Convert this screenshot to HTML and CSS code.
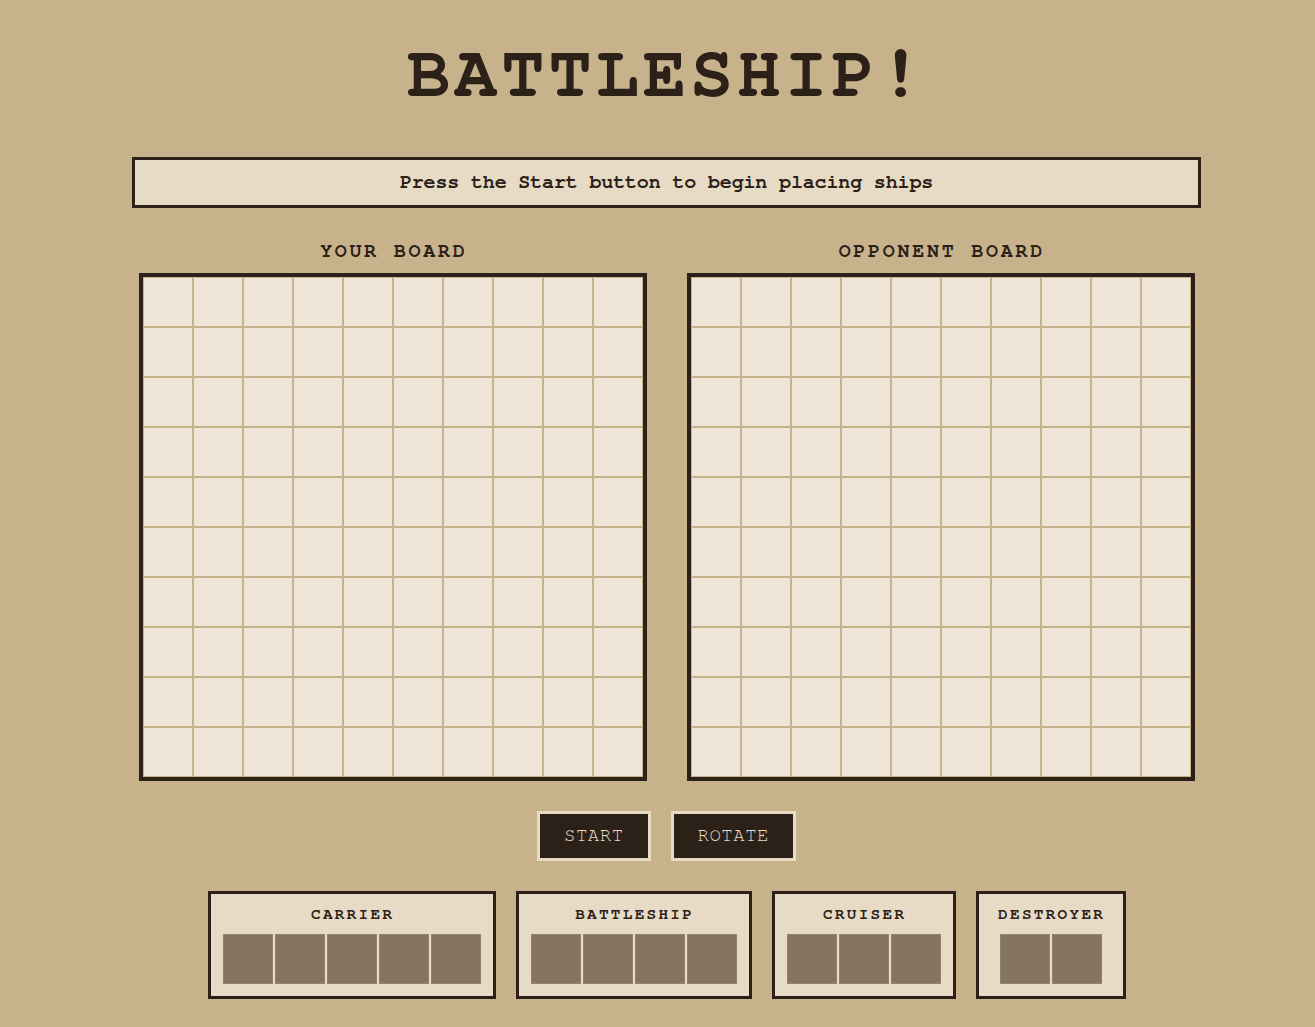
FILE: index.html
```html
<!DOCTYPE html>
<html lang="en">
<head>
<meta charset="utf-8">
<title>Battleship!</title>
<link rel="stylesheet" href="styles.css">
</head>
<body>
<div class="page">
  <h1 class="title">BATTLESHIP!</h1>
  <div class="message">Press the Start button to begin placing ships</div>

  <div class="boards">
    <section class="board-wrap">
      <h2 class="board-title">YOUR BOARD</h2>
      <div class="board">
        <div class="cell"></div><div class="cell"></div><div class="cell"></div><div class="cell"></div><div class="cell"></div><div class="cell"></div><div class="cell"></div><div class="cell"></div><div class="cell"></div><div class="cell"></div>
        <div class="cell"></div><div class="cell"></div><div class="cell"></div><div class="cell"></div><div class="cell"></div><div class="cell"></div><div class="cell"></div><div class="cell"></div><div class="cell"></div><div class="cell"></div>
        <div class="cell"></div><div class="cell"></div><div class="cell"></div><div class="cell"></div><div class="cell"></div><div class="cell"></div><div class="cell"></div><div class="cell"></div><div class="cell"></div><div class="cell"></div>
        <div class="cell"></div><div class="cell"></div><div class="cell"></div><div class="cell"></div><div class="cell"></div><div class="cell"></div><div class="cell"></div><div class="cell"></div><div class="cell"></div><div class="cell"></div>
        <div class="cell"></div><div class="cell"></div><div class="cell"></div><div class="cell"></div><div class="cell"></div><div class="cell"></div><div class="cell"></div><div class="cell"></div><div class="cell"></div><div class="cell"></div>
        <div class="cell"></div><div class="cell"></div><div class="cell"></div><div class="cell"></div><div class="cell"></div><div class="cell"></div><div class="cell"></div><div class="cell"></div><div class="cell"></div><div class="cell"></div>
        <div class="cell"></div><div class="cell"></div><div class="cell"></div><div class="cell"></div><div class="cell"></div><div class="cell"></div><div class="cell"></div><div class="cell"></div><div class="cell"></div><div class="cell"></div>
        <div class="cell"></div><div class="cell"></div><div class="cell"></div><div class="cell"></div><div class="cell"></div><div class="cell"></div><div class="cell"></div><div class="cell"></div><div class="cell"></div><div class="cell"></div>
        <div class="cell"></div><div class="cell"></div><div class="cell"></div><div class="cell"></div><div class="cell"></div><div class="cell"></div><div class="cell"></div><div class="cell"></div><div class="cell"></div><div class="cell"></div>
        <div class="cell"></div><div class="cell"></div><div class="cell"></div><div class="cell"></div><div class="cell"></div><div class="cell"></div><div class="cell"></div><div class="cell"></div><div class="cell"></div><div class="cell"></div>
      </div>
    </section>
    <section class="board-wrap">
      <h2 class="board-title">OPPONENT BOARD</h2>
      <div class="board">
        <div class="cell"></div><div class="cell"></div><div class="cell"></div><div class="cell"></div><div class="cell"></div><div class="cell"></div><div class="cell"></div><div class="cell"></div><div class="cell"></div><div class="cell"></div>
        <div class="cell"></div><div class="cell"></div><div class="cell"></div><div class="cell"></div><div class="cell"></div><div class="cell"></div><div class="cell"></div><div class="cell"></div><div class="cell"></div><div class="cell"></div>
        <div class="cell"></div><div class="cell"></div><div class="cell"></div><div class="cell"></div><div class="cell"></div><div class="cell"></div><div class="cell"></div><div class="cell"></div><div class="cell"></div><div class="cell"></div>
        <div class="cell"></div><div class="cell"></div><div class="cell"></div><div class="cell"></div><div class="cell"></div><div class="cell"></div><div class="cell"></div><div class="cell"></div><div class="cell"></div><div class="cell"></div>
        <div class="cell"></div><div class="cell"></div><div class="cell"></div><div class="cell"></div><div class="cell"></div><div class="cell"></div><div class="cell"></div><div class="cell"></div><div class="cell"></div><div class="cell"></div>
        <div class="cell"></div><div class="cell"></div><div class="cell"></div><div class="cell"></div><div class="cell"></div><div class="cell"></div><div class="cell"></div><div class="cell"></div><div class="cell"></div><div class="cell"></div>
        <div class="cell"></div><div class="cell"></div><div class="cell"></div><div class="cell"></div><div class="cell"></div><div class="cell"></div><div class="cell"></div><div class="cell"></div><div class="cell"></div><div class="cell"></div>
        <div class="cell"></div><div class="cell"></div><div class="cell"></div><div class="cell"></div><div class="cell"></div><div class="cell"></div><div class="cell"></div><div class="cell"></div><div class="cell"></div><div class="cell"></div>
        <div class="cell"></div><div class="cell"></div><div class="cell"></div><div class="cell"></div><div class="cell"></div><div class="cell"></div><div class="cell"></div><div class="cell"></div><div class="cell"></div><div class="cell"></div>
        <div class="cell"></div><div class="cell"></div><div class="cell"></div><div class="cell"></div><div class="cell"></div><div class="cell"></div><div class="cell"></div><div class="cell"></div><div class="cell"></div><div class="cell"></div>
      </div>
    </section>
  </div>

  <div class="controls">
    <button class="btn">START</button>
    <button class="btn">ROTATE</button>
  </div>

  <div class="fleet">
    <div class="ship">
      <div class="ship-name">CARRIER</div>
      <div class="ship-cells">
        <div class="ship-cell"></div><div class="ship-cell"></div><div class="ship-cell"></div><div class="ship-cell"></div><div class="ship-cell"></div>
      </div>
    </div>
    <div class="ship">
      <div class="ship-name">BATTLESHIP</div>
      <div class="ship-cells">
        <div class="ship-cell"></div><div class="ship-cell"></div><div class="ship-cell"></div><div class="ship-cell"></div>
      </div>
    </div>
    <div class="ship">
      <div class="ship-name">CRUISER</div>
      <div class="ship-cells">
        <div class="ship-cell"></div><div class="ship-cell"></div><div class="ship-cell"></div>
      </div>
    </div>
    <div class="ship">
      <div class="ship-name">DESTROYER</div>
      <div class="ship-cells">
        <div class="ship-cell"></div><div class="ship-cell"></div>
      </div>
    </div>
  </div>
</div>
</body>
</html>
```

FILE: styles.css
```css
* {
  box-sizing: border-box;
}

html, body {
  margin: 0;
  padding: 0;
  background: #c8b28c;
}

body {
  font-family: FreeMono, "Liberation Mono", "Courier New", monospace;
  color: #2b2118;
  padding-left: 18px;
}

.page {
  width: 1069px;
  margin: 0 auto;
  padding-top: 34px;
  padding-bottom: 30px;
  display: flex;
  flex-direction: column;
  align-items: center;
}

.title {
  margin: 0;
  font-size: 72px;
  line-height: 80px;
  font-weight: bold;
  letter-spacing: 4px;
  text-align: center;
}

.message {
  align-self: stretch;
  margin-top: 43px;
  border: 3px solid #2b2118;
  background: #e8dbc6;
  padding: 12px;
  font-size: 20px;
  line-height: 21px;
  font-weight: bold;
  letter-spacing: -0.15px;
  text-align: center;
}

.boards {
  margin-top: 33px;
  display: flex;
  justify-content: center;
  gap: 40px;
}

.board-wrap {
  display: flex;
  flex-direction: column;
  align-items: center;
}

.board-title {
  margin: 0 0 12px;
  padding-left: 2.75px;
  font-size: 20px;
  line-height: 20px;
  font-weight: bold;
  letter-spacing: 2.75px;
}

.board {
  display: grid;
  grid-template-columns: repeat(10, 50px);
  grid-auto-rows: 50px;
  border: 4px solid #2b2118;
  background: #efe5d7;
}

.cell {
  border: 1px solid #c8b28c;
  background: #efe5d7;
}

.controls {
  margin-top: 30px;
  display: flex;
  gap: 20px;
}

.btn {
  font-family: FreeMono, "Liberation Mono", "Courier New", monospace;
  font-size: 19px;
  line-height: 20px;
  letter-spacing: 0.5px;
  color: #e8dbc6;
  background: #2b2118;
  border: 3px solid #e8dbc6;
  padding: 12px 24px;
  cursor: pointer;
}

.fleet {
  margin-top: 30px;
  display: flex;
  justify-content: center;
  gap: 20px;
}

.ship {
  min-width: 150px;
  border: 3px solid #2b2118;
  background: #e8dbc6;
  padding: 12px;
  display: flex;
  flex-direction: column;
  align-items: center;
}

.ship-name {
  font-size: 16px;
  line-height: 16px;
  font-weight: bold;
  letter-spacing: 2.3px;
  padding-left: 2.3px;
  margin-bottom: 12px;
}

.ship-cells {
  display: flex;
  gap: 2px;
}

.ship-cell {
  width: 50px;
  height: 50px;
  background: #857462;
  border: 1px solid #94826f;
}
```
